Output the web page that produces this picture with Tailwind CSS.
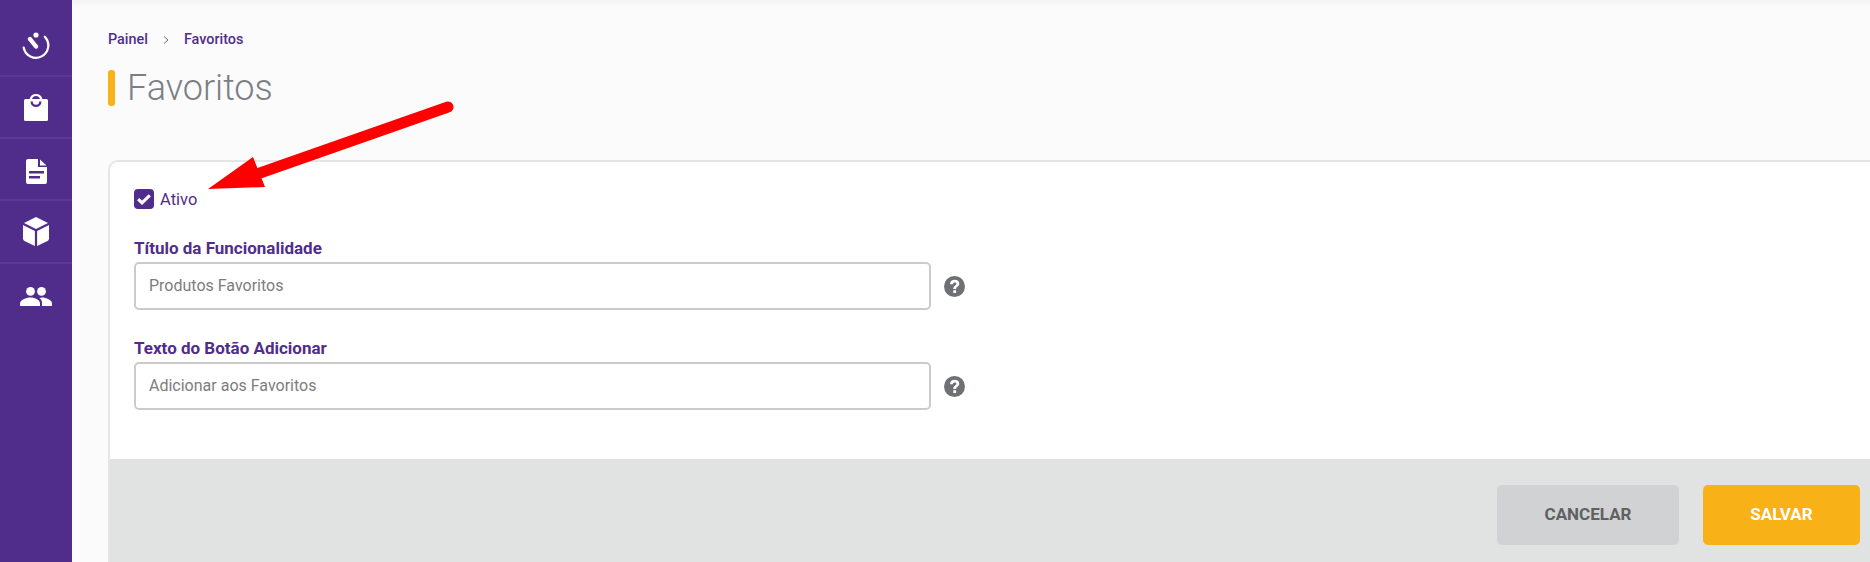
<!DOCTYPE html>
<html lang="pt-BR">
<head>
  <meta charset="UTF-8" />
  <title>Favoritos</title>
  <script src="https://cdn.jsdelivr.net/npm/@tailwindcss/browser@4"></script>
</head>
<body class="bg-[#fbfbfb] font-['Roboto',sans-serif] h-[562px] overflow-hidden">
<div class="flex h-[562px] relative">

  <!-- Sidebar -->
  <aside class="w-[72px] shrink-0 bg-[#512d8b] flex flex-col text-white">
    <a class="h-[77px] flex items-center justify-center pt-[14px] border-b-2 border-[#5c3a94]">
      <svg class="w-[28px] h-[28px]" viewBox="0 0 28 28" fill="none" stroke="currentColor">
        <circle cx="14" cy="4" r="2.6" fill="currentColor" stroke="none"/>
        <path d="M8 8L14 15.5" stroke-width="4.4" stroke-linecap="round"/>
        <path d="M1.7 16.5A12.4 12.4 0 1 0 22.8 5.7" stroke-width="2.2" stroke-linecap="round"/>
      </svg>
    </a>
    <a class="h-[62px] flex items-center justify-center border-b-2 border-[#5c3a94]">
      <svg class="w-[24px] h-[27px]" viewBox="0 0 24 27" fill="currentColor">
        <path fill-rule="evenodd" d="M1.5 5H5.6A6.6 6.6 0 0 1 18.4 5H22.5A1.5 1.5 0 0 1 24 6.5V25.5A1.5 1.5 0 0 1 22.5 27H1.5A1.5 1.5 0 0 1 0 25.5V6.5A1.5 1.5 0 0 1 1.5 5ZM8 5H16A4.2 4.2 0 0 0 8 5ZM6.5 7.5A5.5 5.5 0 0 0 17.5 7.5H15.2A3.2 3.2 0 0 1 8.8 7.5Z"/>
      </svg>
    </a>
    <a class="h-[62px] flex items-center justify-center pt-[4px] border-b-2 border-[#5c3a94]">
      <svg class="w-[21px] h-[25px]" viewBox="0 0 21 25" fill="currentColor">
        <path fill-rule="evenodd" d="M2 0H12V8H21V23A2 2 0 0 1 19 25H2A2 2 0 0 1 0 23V2A2 2 0 0 1 2 0ZM14 0.5L20.5 6.5H14ZM3 12V14.5H18V12ZM3 17V19.5H14V17Z"/>
      </svg>
    </a>
    <a class="h-[63px] flex items-center justify-center border-b-2 border-[#5c3a94]">
      <svg class="w-[26px] h-[29px]" viewBox="0 0 26 29" fill="currentColor">
        <path d="M13 0L25 6L13 12L1 6Z"/>
        <path d="M0 8L11.9 14V29L1.5 24Q0 23.2 0 21.5Z"/>
        <path d="M26 8L14.1 14V29L24.5 24Q26 23.2 26 21.5Z"/>
      </svg>
    </a>
    <a class="h-[62px] flex items-center justify-center pt-[2px]">
      <svg class="w-[32px] h-[19px]" viewBox="0 0 32 19" fill="currentColor">
        <circle cx="10.5" cy="4.4" r="4.4"/>
        <circle cx="21.5" cy="4.4" r="4.4"/>
        <path d="M0 19V16.5C0 13 6 10.6 10.5 10.6S20 13 20 16.5V19Z"/>
        <path d="M22 19V15.5C22 13.8 21 12 19.5 10.9Q21 10.6 22 10.6C26 10.6 32 13 32 16.5V19Z"/>
      </svg>
    </a>
  </aside>

  <!-- Conteudo -->
  <main class="flex-1 min-w-0 flex flex-col pl-[36px]">
    <div class="absolute left-[72px] right-0 top-0 h-[8px] bg-linear-to-b from-[#f4f4f4] to-[#fbfbfb]"></div>
    <nav class="flex items-center text-[14.4px] font-medium text-[#512d8b] mt-[32px] leading-[16px]">
      <span>Painel</span>
      <svg class="w-[6px] h-[8px] ml-[15px] mr-[15px]" viewBox="0 0 6 8" fill="none" stroke="#6b6b6b" stroke-width="1"><path d="M1 0.5L5 4L1 7.5"/></svg>
      <span>Favoritos</span>
    </nav>
    <div class="flex items-center mt-[22px] h-[36px]">
      <span class="w-[7px] h-[36px] rounded-[3px] bg-[#f8b117]"></span>
      <h1 class="ml-[12px] text-[36px] font-light text-[#7b7f85] leading-[36px]">Favoritos</h1>
    </div>

    <section class="mt-[54px] w-[1800px] h-[420px] shrink-0 bg-white border-2 border-[#e5e5e5] rounded-tl-[10px] flex flex-col">
      <div class="h-[297px] shrink-0 pl-[24px]">
        <label class="flex items-center pt-[27px]">
          <span class="w-[20px] h-[20px] rounded-[4px] bg-[#512d8b] flex items-center justify-center">
            <svg class="w-[14px] h-[11px]" viewBox="0 0 14 11" fill="none" stroke="white" stroke-width="3.2"><path d="M1.2 5.2L5 8.8L12.8 1.4"/></svg>
          </span>
          <span class="ml-[6px] text-[16.5px] leading-[19px] text-[#512d8b]">Ativo</span>
        </label>

        <p class="mt-[29px] text-[17px] font-bold text-[#512d8b] leading-[20px]">Título da Funcionalidade</p>
        <div class="flex items-center mt-[4px]">
          <div class="w-[797px] h-[48px] border-2 border-[#cbcbcb] rounded-[5px] bg-white flex items-center pl-[13px] text-[16px] text-[#7d7d7d]">Produtos Favoritos</div>
          <svg class="w-[21px] h-[21px] ml-[13px]" viewBox="0 0 21 21"><circle cx="10.5" cy="10.5" r="10.5" fill="#6e7074"/><path d="M6 8.2C6 5.2 8 3.8 10.7 3.8C13.4 3.8 15.3 5.3 15.3 7.7C15.3 10.6 12.1 10.4 12.1 13H9.3C9.3 9.6 12.4 9.6 12.4 7.8C12.4 6.9 11.7 6.4 10.7 6.4C9.6 6.4 8.9 7.1 8.8 8.2Z" fill="white"/><rect x="9.3" y="14.2" width="2.8" height="2.8" fill="white"/></svg>
        </div>

        <p class="mt-[28px] text-[17px] font-bold text-[#512d8b] leading-[20px]">Texto do Botão Adicionar</p>
        <div class="flex items-center mt-[4px]">
          <div class="w-[797px] h-[48px] border-2 border-[#cbcbcb] rounded-[5px] bg-white flex items-center pl-[13px] text-[16px] text-[#7d7d7d]">Adicionar aos Favoritos</div>
          <svg class="w-[21px] h-[21px] ml-[13px]" viewBox="0 0 21 21"><circle cx="10.5" cy="10.5" r="10.5" fill="#6e7074"/><path d="M6 8.2C6 5.2 8 3.8 10.7 3.8C13.4 3.8 15.3 5.3 15.3 7.7C15.3 10.6 12.1 10.4 12.1 13H9.3C9.3 9.6 12.4 9.6 12.4 7.8C12.4 6.9 11.7 6.4 10.7 6.4C9.6 6.4 8.9 7.1 8.8 8.2Z" fill="white"/><rect x="9.3" y="14.2" width="2.8" height="2.8" fill="white"/></svg>
        </div>
      </div>

      <div class="flex-1 bg-[#e1e3e2] pl-[1387px] pt-[26px] flex items-start gap-[24px]">
        <button class="w-[182px] h-[60px] rounded-[5px] bg-[#d1d2d4] text-[#5f6062] text-[17px] font-bold">CANCELAR</button>
        <button class="w-[157px] h-[60px] rounded-[5px] bg-[#f8b117] text-white text-[17px] font-bold">SALVAR</button>
      </div>
    </section>
  </main>

  <!-- Seta -->
  <svg class="absolute left-0 top-0 pointer-events-none" width="500" height="220" viewBox="0 0 500 220">
    <path d="M448 107L260 173" stroke="#ff0000" stroke-width="11" stroke-linecap="round" fill="none"/>
    <path d="M208 189L253 157L265 187Z" fill="#ff0000"/>
  </svg>
</div>
</body>
</html>
